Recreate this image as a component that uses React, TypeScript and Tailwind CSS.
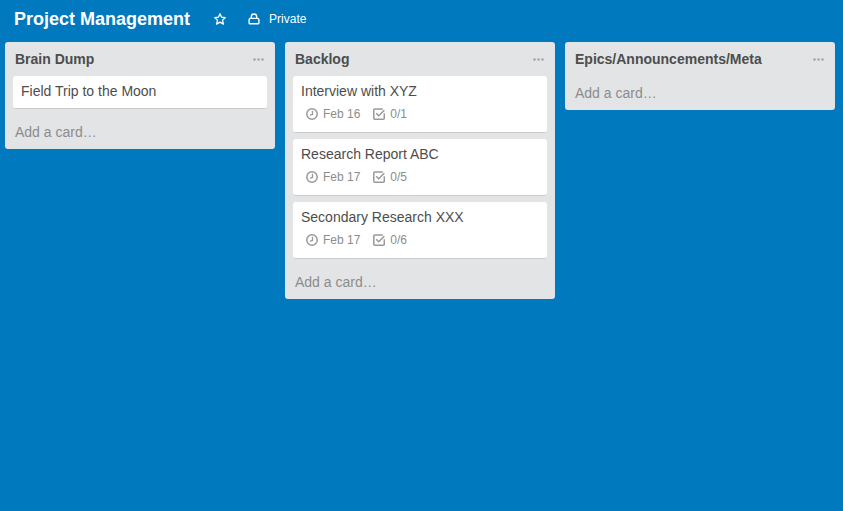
type CardData = { title: string; due?: string; checks?: string };
type ListData = { name: string; cards: CardData[] };

const lists: ListData[] = [
  { name: "Brain Dump", cards: [{ title: "Field Trip to the Moon" }] },
  {
    name: "Backlog",
    cards: [
      { title: "Interview with XYZ", due: "Feb 16", checks: "0/1" },
      { title: "Research Report ABC", due: "Feb 17", checks: "0/5" },
      { title: "Secondary Research XXX", due: "Feb 17", checks: "0/6" },
    ],
  },
  { name: "Epics/Announcements/Meta", cards: [] },
];

function StarIcon() {
  return (
    <svg className="size-3" viewBox="0 0 12 12" fill="none" stroke="currentColor" strokeWidth="1.3" strokeLinejoin="round" aria-hidden="true">
      <path d="M6 .7 7.6 4.2l3.7.4-2.8 2.6.9 3.9L6 9.1l-3.4 2 .9-3.9L.7 4.6l3.7-.4z" />
    </svg>
  );
}

function LockIcon() {
  return (
    <svg className="size-3" viewBox="0 0 12 12" fill="none" stroke="currentColor" strokeWidth="1.4" strokeLinejoin="round" aria-hidden="true">
      <path d="M2 5.4h8l.9 1v3.5c0 .5-.4.9-.9.9H2a.9.9 0 0 1-.9-.9V6.4z" />
      <path d="M3.3 5.4V3.7a2.7 2.7 0 0 1 5.4 0v1.7" />
    </svg>
  );
}

function ClockIcon() {
  return (
    <svg className="size-3 text-[#999999]" viewBox="0 0 12 12" fill="none" stroke="currentColor" strokeWidth="1.5" aria-hidden="true">
      <circle cx="6" cy="6" r="5.2" />
      <path d="M6.5 2.8v3.7L4 7.2" strokeWidth="1.3" />
    </svg>
  );
}

function ChecklistIcon() {
  return (
    <svg className="size-3 text-[#999999]" viewBox="0 0 12 12" fill="none" stroke="currentColor" strokeWidth="1.5" aria-hidden="true">
      <path d="M9.8.9H1.7a.9.9 0 0 0-.9.9v8.5c0 .5.4.9.9.9h8.7c.5 0 .9-.4.9-.9V5.2" />
      <path d="m3.2 5.2 2.5 2.6 5.6-5.6" />
    </svg>
  );
}

function DotsIcon() {
  return (
    <svg className="h-[3px] w-[11px]" viewBox="0 0 11 3" fill="currentColor" aria-hidden="true">
      <circle cx="1.5" cy="1.5" r="1.3" />
      <circle cx="5.5" cy="1.5" r="1.3" />
      <circle cx="9.5" cy="1.5" r="1.3" />
    </svg>
  );
}

function Card({ title, due, checks }: CardData) {
  return (
    <li className="rounded-[3px] border-b border-[#cccccc] bg-white px-2 pt-[5px] pb-[7px]">
      <h3 className="text-sm leading-5 text-[#4d4d4d]">{title}</h3>
      {due && (
        <div className="mt-1 mb-0.5 flex h-[18px] items-center gap-[13px] px-[5px] text-xs text-[#8c8c8c]">
          <span className="flex items-center gap-[5px]">
            <ClockIcon />
            {due}
          </span>
          <span className="flex items-center gap-[5px]">
            <ChecklistIcon />
            {checks}
          </span>
        </div>
      )}
    </li>
  );
}

function List({ name, cards }: ListData) {
  return (
    <section className="w-[270px] shrink-0 rounded-[3px] bg-[#e2e4e6]">
      <header className="flex h-[34px] items-center justify-between pr-[11px] pl-[10px]">
        <h2 className="text-sm font-bold text-[#4d4d4d]">{name}</h2>
        <button type="button" aria-label={`${name} actions`} className="flex h-5 items-center text-[#a6a6a6]">
          <DotsIcon />
        </button>
      </header>
      {cards.length > 0 && (
        <ul className="mb-1.5 flex flex-col gap-1.5 px-2">
          {cards.map((card) => (
            <Card key={card.title} {...card} />
          ))}
        </ul>
      )}
      <button type="button" className="block h-[34px] w-full px-[10px] text-left text-sm text-[#8c8c8c]">
        Add a card…
      </button>
    </section>
  );
}

export default function App() {
  return (
    <div className="flex min-h-screen flex-col bg-[#0079bf] font-['Liberation_Sans',Arial,sans-serif]">
      <header className="flex h-[42px] items-center px-[14px] pb-1 text-white">
        <h1 className="text-lg font-bold">Project Management</h1>
        <button type="button" aria-label="Star board" className="ml-6">
          <StarIcon />
        </button>
        <button type="button" className="ml-[22px] flex items-center gap-[9px] text-xs">
          <LockIcon />
          Private
        </button>
      </header>
      <main className="flex grow items-start gap-[10px] overflow-x-auto px-[5px]">
        {lists.map((list) => (
          <List key={list.name} {...list} />
        ))}
      </main>
    </div>
  );
}
